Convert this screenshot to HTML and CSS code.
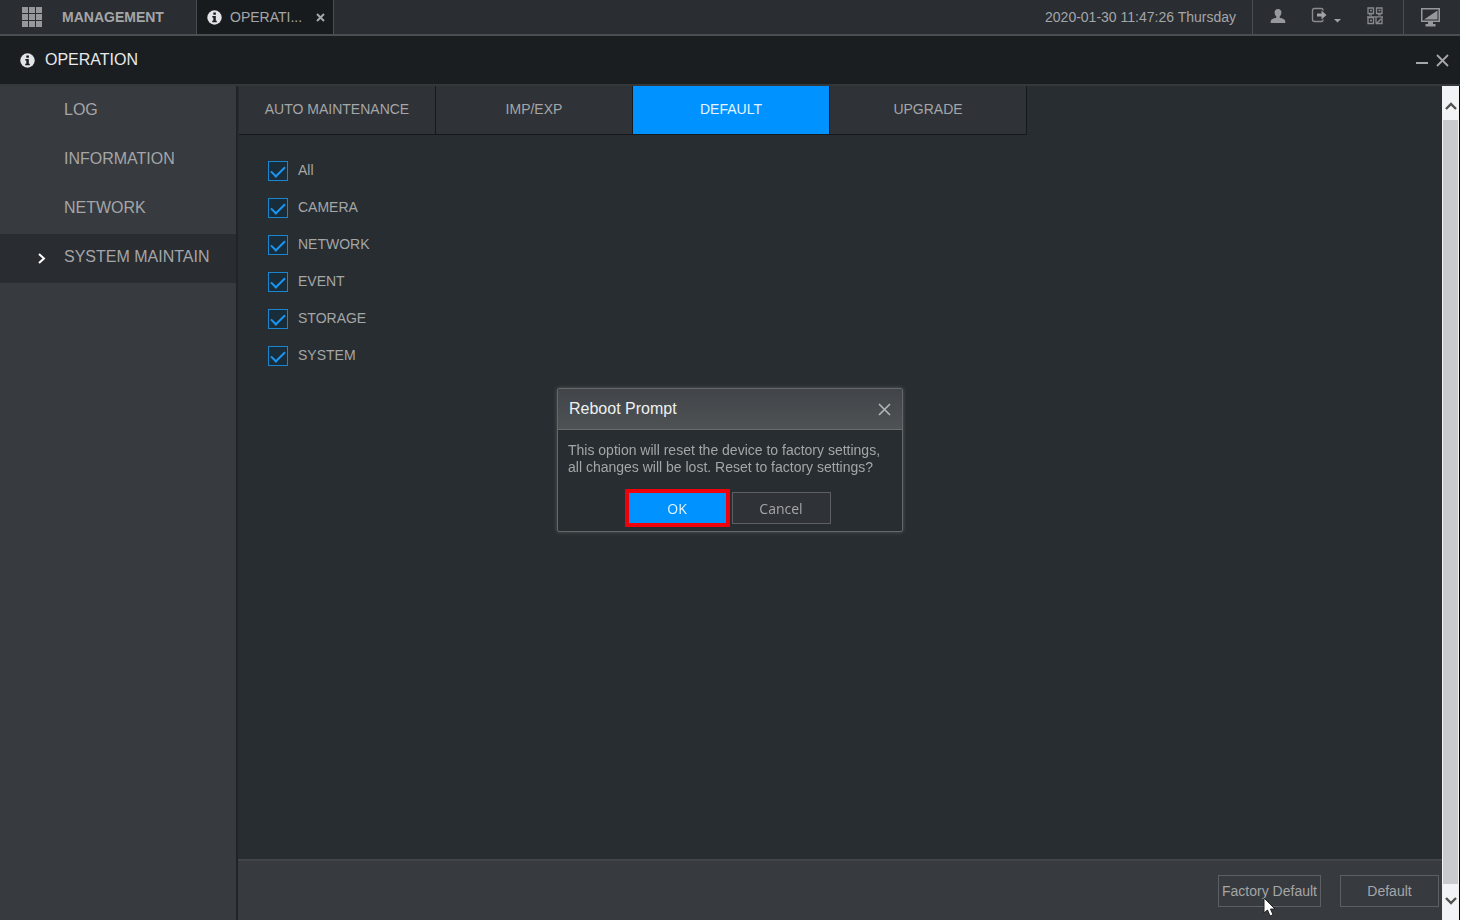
FILE: index.html
```html
<!DOCTYPE html>
<html lang="en">
  <head>
    <meta charset="UTF-8" />
    <meta name="viewport" content="width=device-width, initial-scale=1.0" />
    <title>Operation - System Maintain</title>
    <link rel="stylesheet" href="styles.css">
  </head>
  <body>
    <header class="topbar">
      <button type="button" class="management">
        <svg width="21" height="21" viewBox="0 0 21 21" fill="#96989b">
          <path d="M0 0h6v6H0zM7 0h6v6H7zM14 0h6v6h-6zM0 7h6v6H0zM7 7h6v6H7zM14 7h6v6h-6zM0 14h6v6H0zM7 14h6v6H7zM14 14h6v6h-6z" />
        </svg>
        MANAGEMENT
      </button>
      <div class="window-tab">
        <svg class="info-icon" width="15" height="15" viewBox="0 0 15 15">
          <circle cx="7.500" cy="7.500" r="7.200" fill="#e2e4e5" />
          <path d="M6.300 2.500h2.600v2.200H6.300zM5.300 6h3.500v4.800h1v1.400H5.200v-1.400h1.100V7.400h-1z" fill="#1b1e21" />
        </svg>
        <span>OPERATI...</span>
        <button type="button" class="icon-btn tab-close" aria-label="Close tab">
          <svg width="9" height="9" viewBox="0 0 9 9" stroke="#a5a7aa" stroke-width="2">
            <path d="M1 1l7 7M8 1l-7 7" />
          </svg>
        </button>
      </div>
      <time class="clock">2020-01-30 11:47:26 Thursday</time>
      <div class="tools">
        <button type="button" class="icon-btn" aria-label="User">
          <svg width="16" height="16" viewBox="0 0 16 16" fill="#96989b">
            <path d="M8 1c2.200 0 3.400 1.500 3.400 3.500 0 1.800-.7 3.200-1.700 4v1.200c3 .6 5.600 1.700 5.600 3.600V15H.7v-1.700c0-1.900 2.600-3 5.600-3.600V8.500c-1-.8-1.700-2.200-1.700-4C4.600 2.500 5.800 1 8 1z" />
          </svg>
        </button>
        <button type="button" class="icon-btn" aria-label="Log out">
          <svg width="31" height="18" viewBox="0 0 31 18">
            <path d="M12 3.500V3q0-1.500-1.500-1.500h-7Q1.500 1.500 1.500 3.500v9q0 2 2 2h7q1.500 0 1.500-1.500v-.5" fill="none" stroke="#888a8d" stroke-width="1.400" />
            <path d="M6 6.500h4.500V3.500L15.500 8l-5 4.500V9.500H6z" fill="#a0a2a5" />
            <path d="M23 12h7l-3.500 3.500z" fill="#a0a2a5" />
          </svg>
        </button>
        <button type="button" class="icon-btn" aria-label="QR code">
          <svg width="16" height="18" viewBox="0 0 16 18" fill="none" stroke="#888a8d" stroke-width="1.300">
            <path d="M1 1h5.500v5.500H1zM9.500 1H15v5.500H9.500z" />
            <path d="M3 3.500h2M11.500 3.500h2M2 7.800h3M11 7.800h3" />
            <path d="M1 10.500h5.500v6H1zM3 13.500h2M0 9.800h16M9 16.500v-6M15 10.500v6H9M10 16l4-4" />
          </svg>
        </button>
      </div>
      <button type="button" class="icon-btn monitor" aria-label="Display">
        <svg width="19" height="19" viewBox="0 0 19 19" fill="#96989b">
          <path d="M0 0h19v14H0zM1.500 1.500v11h16v-11z" fill-rule="evenodd" />
          <path d="M16.500 2.500v9H3zM7 14h5v2h2.500v2.500h-10V16H7z" />
        </svg>
      </button>
    </header>

    <div class="titlebar">
      <svg class="info-icon" width="15" height="15" viewBox="0 0 15 15">
        <circle cx="7.500" cy="7.500" r="7.200" fill="#e2e4e5" />
        <path d="M6.300 2.500h2.600v2.200H6.300zM5.300 6h3.500v4.800h1v1.400H5.200v-1.400h1.100V7.400h-1z" fill="#1b1e21" />
      </svg>
      <h1>OPERATION</h1>
      <button type="button" class="icon-btn" aria-label="Minimize">
        <svg width="12" height="12" viewBox="0 0 12 12" fill="#a5a7aa"><path d="M0 8h12v2H0z" /></svg>
      </button>
      <button type="button" class="icon-btn" aria-label="Close">
        <svg width="13" height="13" viewBox="0 0 13 13" stroke="#a5a7aa" stroke-width="1.800"><path d="M1 1l11 11M12 1L1 12" /></svg>
      </button>
    </div>

    <div class="workspace">
      <nav class="sidebar">
        <a href="#log">LOG</a>
        <a href="#information">INFORMATION</a>
        <a href="#network">NETWORK</a>
        <a href="#maintain" class="active">
          <svg width="8" height="14" viewBox="0 0 8 14" fill="none" stroke="#fff" stroke-width="2"><path d="M1 4l5 4.500L1 13" /></svg>
          SYSTEM MAINTAIN
        </a>
      </nav>

      <main class="content">
        <div class="tabs">
          <button type="button">AUTO MAINTENANCE</button>
          <button type="button">IMP/EXP</button>
          <button type="button" class="active">DEFAULT</button>
          <button type="button">UPGRADE</button>
        </div>

        <form class="options">
          <div class="option"><input type="checkbox" id="all" checked /><label for="all">All</label></div>
          <div class="option"><input type="checkbox" id="camera" checked /><label for="camera">CAMERA</label></div>
          <div class="option"><input type="checkbox" id="net" checked /><label for="net">NETWORK</label></div>
          <div class="option"><input type="checkbox" id="event" checked /><label for="event">EVENT</label></div>
          <div class="option"><input type="checkbox" id="storage" checked /><label for="storage">STORAGE</label></div>
          <div class="option"><input type="checkbox" id="system" checked /><label for="system">SYSTEM</label></div>
        </form>

        <footer class="actions">
          <button type="button" class="btn btn-factory">
            Factory Default
            <svg class="cursor" width="13" height="20" viewBox="0 0 13 20">
              <path d="M1 1v15l3.500-3 2.500 6 3-1.300-2.500-5.700H12z" fill="#fff" stroke="#222" stroke-width="1" />
            </svg>
          </button>
          <button type="button" class="btn">Default</button>
        </footer>
      </main>

      <div class="scrollbar">
        <button type="button" class="icon-btn" aria-label="Scroll up">
          <svg width="12" height="9" viewBox="0 0 12 9" fill="none" stroke="#505050" stroke-width="2.400"><path d="M1 7l5-5 5 5" /></svg>
        </button>
        <div class="thumb"></div>
        <button type="button" class="icon-btn" aria-label="Scroll down">
          <svg width="12" height="9" viewBox="0 0 12 9" fill="none" stroke="#505050" stroke-width="2.400"><path d="M1 2l5 5 5-5" /></svg>
        </button>
      </div>
    </div>

    <div class="overlay">
      <section class="dialog" role="dialog" aria-labelledby="dialog-title">
        <div class="dialog-header">
          <h2 id="dialog-title">Reboot Prompt</h2>
          <button type="button" class="icon-btn" aria-label="Close dialog">
            <svg width="13" height="13" viewBox="0 0 13 13" stroke="#b4b6b8" stroke-width="1.600"><path d="M1 1l11 11M12 1L1 12" /></svg>
          </button>
        </div>
        <div class="dialog-body">
          <p>This option will reset the device to factory settings,<br />all changes will be lost. Reset to factory settings?</p>
          <div class="dialog-buttons">
            <button type="button" class="btn btn-ok">OK</button>
            <button type="button" class="btn">Cancel</button>
          </div>
        </div>
      </section>
    </div>
  </body>
</html>
```
FILE: styles.css
```css
:root {
  --bar: #2a2d32;
  --panel: #373a3e;
  --main: #272d30;
  --line: #4a4d51;
  --edge: #16191c;
  --text: #a4a6a8;
  --blue: #0093ff;
}

* {
  margin: 0;
  padding: 0;
  box-sizing: border-box;
}

body {
  display: flex;
  flex-direction: column;
  min-height: 100vh;
  background-color: var(--main);
  color: var(--text);
  font-family: "Liberation Sans", Arial, sans-serif;
  font-size: 14px;
}

button {
  border: none;
  background: none;
  color: inherit;
  font: inherit;
}

svg {
  display: block;
  flex: none;
}

.icon-btn {
  display: flex;
  align-items: center;
  justify-content: center;
}

/* Top bar */
.topbar {
  display: flex;
  height: 36px;
  background-color: var(--bar);
  border-bottom: 2px solid var(--line);
}

.management {
  display: flex;
  align-items: center;
  gap: 19px;
  width: 197px;
  padding-left: 22px;
  border-right: 1px solid var(--line);
  font-weight: bold;
}

.window-tab {
  display: flex;
  align-items: center;
  width: 137px;
  padding: 0 8px 0 10px;
  background-color: #181b1e;
  border-right: 1px solid var(--line);
}

.window-tab span {
  margin-left: 8px;
}

.tab-close {
  margin-left: auto;
}

.clock {
  margin-left: auto;
  padding-right: 16px;
  line-height: 34px;
}

.tools {
  display: flex;
  gap: 25px;
  width: 152px;
  padding: 0 0 2px 17px;
  border-left: 1px solid var(--line);
  border-right: 1px solid var(--line);
}

.monitor {
  width: 56px;
  padding-right: 4px;
}

/* Window title */
.titlebar {
  display: flex;
  align-items: center;
  height: 50px;
  padding: 0 11px 0 20px;
  background-color: #1a1e21;
  border-bottom: 2px solid #34383b;
}

.titlebar h1 {
  flex: 1;
  margin-left: 10px;
  color: #e8eaeb;
  font-size: 16px;
  font-weight: normal;
}

.titlebar .icon-btn + .icon-btn {
  margin-left: 8px;
}

.workspace {
  flex: 1;
  display: flex;
}

/* Sidebar */
.sidebar {
  width: 238px;
  padding-top: 1px;
  background-color: var(--panel);
  border-right: 2px solid #202427;
}

.sidebar a {
  display: flex;
  align-items: center;
  height: 49px;
  padding: 0 0 4px 64px;
  color: var(--text);
  font-size: 16px;
  text-decoration: none;
}

.sidebar .active {
  gap: 18px;
  padding-left: 38px;
  background-color: #292c31;
}

/* Content */
.content {
  flex: 1;
  display: flex;
  flex-direction: column;
}

.tabs {
  display: flex;
  padding-left: 1px;
}

.tabs button {
  width: 197px;
  height: 49px;
  padding-bottom: 3px;
  background-color: #2f3237;
  border-right: 1px solid var(--edge);
  border-bottom: 1px solid var(--edge);
}

.tabs .active {
  background-color: var(--blue);
  color: #e6f4ff;
}

.options {
  flex: 1;
  display: flex;
  flex-direction: column;
  gap: 17px;
  padding: 26px 30px;
}

.option {
  display: flex;
  align-items: center;
  gap: 10px;
  height: 20px;
}

.option label {
  padding-bottom: 2px;
}

.option input {
  appearance: none;
  display: grid;
  place-items: center;
  width: 20px;
  height: 20px;
  border: 1px solid #1a86cf;
  background-color: #192c3a;
}

.option input:checked::before {
  content: "";
  width: 12px;
  height: 6px;
  margin-bottom: 2px;
  border-left: 2px solid #1c95f0;
  border-bottom: 2px solid #1c95f0;
  transform: rotate(-45deg);
}

.actions {
  display: flex;
  align-items: center;
  justify-content: flex-end;
  gap: 19px;
  height: 61px;
  padding-right: 3px;
  background-color: var(--panel);
  border-top: 2px solid #42464a;
}

.btn {
  width: 99px;
  height: 32px;
  border: 1px solid #5c6063;
}

.btn-factory {
  position: relative;
  width: 103px;
  white-space: nowrap;
}

.cursor {
  position: absolute;
  top: 21px;
  left: 44px;
}

/* Scrollbar */
.scrollbar {
  display: flex;
  flex-direction: column;
  width: 18px;
  background-color: #f2f3f4;
  border-right: 1px solid #000;
}

.scrollbar .icon-btn {
  height: 34px;
  padding-top: 6px;
}

.scrollbar .icon-btn:last-child {
  height: 36px;
  padding: 0 0 4px;
}

.thumb {
  flex: 1;
  margin: 0 1px;
  background-color: #c9cacb;
}

/* Reboot dialog */
.overlay {
  position: fixed;
  inset: 0;
  display: flex;
  align-items: center;
  justify-content: center;
}

.dialog {
  width: 346px;
  background-color: var(--main);
  border: 1px solid #64686b;
  border-radius: 2px;
  box-shadow: 0 0 4px #565a5d;
}

.dialog-header {
  display: flex;
  align-items: center;
  justify-content: space-between;
  height: 41px;
  padding: 0 11px;
  background-image: linear-gradient(#414549, #4e5255);
  border-bottom: 1px solid #686c6f;
}

.dialog-header h2 {
  color: #eef0f1;
  font-size: 16px;
  font-weight: normal;
}

.dialog-body {
  padding: 12px 12px 7px 10px;
}

.dialog-body p {
  line-height: 17px;
  white-space: nowrap;
}

.dialog-buttons {
  display: flex;
  justify-content: center;
  gap: 5px;
  margin-top: 16px;
}

.dialog-buttons .btn {
  background-color: #2f3236;
  font-family: "Open Sans", "Noto Sans", sans-serif;
}

.dialog-buttons .btn-ok {
  border: none;
  background-color: var(--blue);
  color: #e6f4ff;
  outline: 4px solid #f00008;
  outline-offset: -1px;
}
```
